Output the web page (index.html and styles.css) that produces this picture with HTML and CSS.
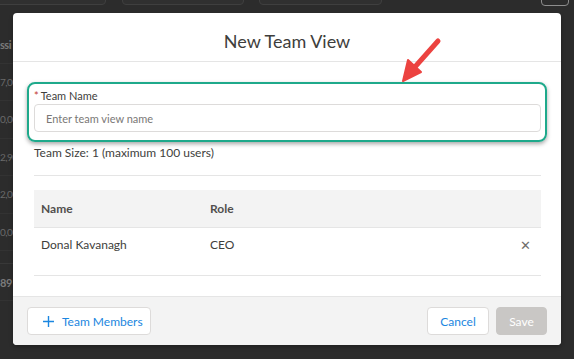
FILE: index.html
```html
<!DOCTYPE html>
<html lang="en">
<head>
  <meta charset="UTF-8" />
  <title>New Team View</title>
  <link rel="stylesheet" href="styles.css">
</head>
<body>
  <div class="page">
    <div class="topbar">
      <span class="tab tab-a"></span>
      <span class="tab tab-b"></span>
      <span class="tab tab-c"></span>
      <span class="close-box"></span>
    </div>
    <div class="bg-rows">
      <div class="bg-row bold">ssi</div>
      <div class="bg-row">7,00</div>
      <div class="bg-row">0,00</div>
      <div class="bg-row">2,90</div>
      <div class="bg-row">2,00</div>
      <div class="bg-row">0,00</div>
      <div class="bg-row total bold">89</div>
    </div>
  </div>

  <div class="modal">
    <header class="modal-header"><h2>New Team View</h2></header>
    <div class="modal-body">
      <div class="field">
        <label for="teamName"><abbr title="required">*</abbr>Team Name</label>
        <input type="text" id="teamName" placeholder="Enter team view name">
      </div>
      <p class="team-size">Team Size: 1 (maximum 100 users)</p>
      <table class="members">
        <thead>
          <tr><th class="col-name">Name</th><th>Role</th><th class="col-x"></th></tr>
        </thead>
        <tbody>
          <tr><td class="col-name">Donal Kavanagh</td><td>CEO</td><td class="col-x"><span class="remove">&#x2715;</span></td></tr>
        </tbody>
      </table>
    </div>
    <footer class="modal-footer">
      <button class="btn btn-add"><svg class="plus" width="11" height="11" viewBox="0 0 11 11"><path d="M5.5 0v11M0 5.5h11" stroke="#1b86e0" stroke-width="1.4"/></svg>Team Members</button>
      <div class="right-btns">
        <button class="btn btn-cancel">Cancel</button>
        <button class="btn btn-save" disabled>Save</button>
      </div>
    </footer>
  </div>

  <div class="highlight"></div>
  <svg class="arrow" width="574" height="359" viewBox="0 0 574 359">
    <line x1="438" y1="41" x2="414" y2="68" stroke="#ec4340" stroke-width="5" stroke-linecap="round"/>
    <polygon points="403,81 408,60 421,72" fill="#ec4340" stroke="#ec4340" stroke-width="2" stroke-linejoin="round"/>
  </svg>
</body>
</html>
```

FILE: styles.css
```css
body { margin: 0; background: #2c2c2c; font-family: Lato, "Liberation Sans", sans-serif; color: #3e3e3c; width: 574px; height: 359px; overflow: hidden; position: relative; }

.page { height: 359px; }
.topbar { display: flex; height: 6px; overflow: hidden; }
.tab { display: block; height: 20px; margin-top: -15px; border: 1px solid #3f3f3f; border-radius: 4px; background: #303030; box-sizing: border-box; }
.tab-a { width: 112px; margin-left: -6px; }
.tab-b { width: 122px; margin-left: 16px; }
.tab-c { width: 123px; margin-left: 15px; }
.close-box { width: 28px; height: 21px; margin-top: -15px; margin-left: 159px; border: 1.5px solid #8d8d8d; border-radius: 4px; box-sizing: border-box; }

.bg-rows { margin-top: 20px; width: 13px; }
.bg-row { height: 37.5px; line-height: 37.5px; font-size: 10px; letter-spacing: -0.5px; color: #6a6a6a; border-bottom: 1px solid #333; box-sizing: border-box; white-space: nowrap; }
.bg-row.bold { font-weight: 700; color: #7a7a7a; font-size: 11px; }
.bg-row.total { margin-top: 12px; border-top: 1px solid #383838; }

.modal { position: absolute; left: 13px; top: 13px; width: 548px; background: #fff; border-radius: 4px; overflow: hidden; box-shadow: 0 2px 4px rgba(0, 0, 0, 0.3); }
.modal-header { height: 48px; border-bottom: 1px solid #e5e5e5; display: flex; align-items: center; justify-content: center; }
.modal-header h2 { margin: 0; font-size: 18px; font-weight: 400; color: #3e3e3c; padding-top: 8px; }

.modal-body { padding: 26px 20px 20px 21px; }
.field label { display: block; font-size: 11px; line-height: 16px; color: #3e3e3c; }
.field abbr { color: #c23934; text-decoration: none; margin-right: 2px; }
.field input { display: block; width: 100%; height: 28px; box-sizing: border-box; border: 1px solid #dddbda; border-radius: 4px; padding: 0 11px; font-family: Lato, "Liberation Sans", sans-serif; font-size: 11px; color: #3e3e3c; }
.field input::placeholder { color: #7a7876; }

.team-size { margin: 13px 0 0; font-size: 12px; line-height: 16px; padding-bottom: 14px; border-bottom: 1px solid #e5e5e5; }

.members { width: 100%; border-collapse: collapse; margin-top: 14px; font-size: 12px; border-bottom: 1px solid #e5e5e5; }
.members th { background: #f3f3f3; height: 37px; text-align: left; font-weight: 700; color: #514f4d; padding: 0 7px; border-bottom: 1px solid #e5e5e5; }
.members td { height: 48px; box-sizing: border-box; padding: 9px 7px 0; vertical-align: top; color: #3e3e3c; }
.members .col-name { width: 155px; }
.members .col-x { width: 20px; text-align: right; padding-right: 10px; }
.remove { color: #706e6b; font-size: 13px; }

.modal-footer { background: #f3f3f3; border-top: 1px solid #e5e5e5; height: 48px; display: flex; align-items: center; justify-content: space-between; padding: 0 14px; }
.right-btns { display: flex; gap: 7px; }
.btn { height: 28px; border-radius: 4px; border: 1px solid #dddbda; background: #fff; font-family: Lato, "Liberation Sans", sans-serif; font-size: 12px; color: #1b86e0; padding: 0 10px; display: flex; align-items: center; gap: 8px; box-sizing: border-box; white-space: nowrap; }
.btn-add { width: 124px; padding: 0 0 0 15px; }
.plus { flex-shrink: 0; }
.btn-cancel { width: 62px; justify-content: center; }
.btn-save { width: 51px; justify-content: center; background: #c9c7c5; border-color: #c9c7c5; color: #fff; }

.highlight { position: absolute; left: 27px; top: 82px; width: 520px; height: 60px; box-sizing: border-box; border: 2.5px solid #1ea98b; border-radius: 8px; box-shadow: 0 2px 4px rgba(0, 0, 0, 0.35); }
.arrow { position: absolute; left: 0; top: 0; }
```
